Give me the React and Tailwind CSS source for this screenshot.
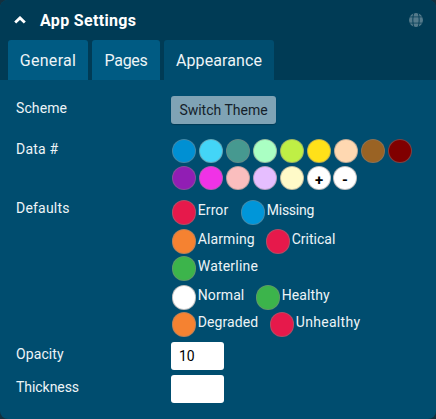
const palette = [
  ['#0090d3', '#43d5f7', '#469990', '#aaffc3', '#bfef45', '#ffe119', '#ffd8b1', '#9a6324', '#800000'],
  ['#911eb4', '#f032e6', '#fabebe', '#e6beff', '#fffac8'],
];

function Dot({ color, children }) {
  return (
    <span
      className="flex h-[24.5px] w-[24.5px] shrink-0 items-center justify-center rounded-full border border-[#808080]/50 pt-1 text-[15px] font-bold text-black"
      style={{ backgroundColor: color }}
    >
      {children}
    </span>
  );
}

function Status({ color, width, track, children }) {
  return (
    <div className={`flex h-6 shrink-0 ${width}`}>
      <Dot color={color} />
      <span className={`-mt-px ml-[1.5px] whitespace-nowrap text-[14px] leading-[22px] ${track}`}>{children}</span>
    </div>
  );
}

function Tab({ width, bg, track, children }) {
  return (
    <button className={`h-10 rounded-t-[3px] pt-px text-center text-[16px] leading-10 ${width} ${bg} ${track}`}>
      {children}
    </button>
  );
}

function Globe() {
  return (
    <svg width="14" height="14" viewBox="0 0 14 14">
      <circle cx="7" cy="7" r="7" fill="#547a8b" />
      <g fill="none" stroke="#003b55" strokeWidth="0.9">
        <path d="M0 3.9h14M0 10.1h14" strokeOpacity="0.8" />
        <path d="M5 -0.5C3.4 3.5 3.4 10.5 5 14.5M9 -0.5C10.6 3.5 10.6 10.5 9 14.5" />
      </g>
    </svg>
  );
}

export default function App() {
  return (
    <div className="h-[419px] w-[436px] overflow-hidden bg-[#12303f] font-['Roboto',sans-serif] text-[#edf4f7]">
      <div className="h-full overflow-hidden rounded-[8px] bg-[#004d6f]">
        <header className="h-20 bg-[#003b55]">
          <div className="flex h-10 items-center pl-[14px] pr-[13px]">
            <svg width="12" height="8" viewBox="0 0 12 8" fill="none" stroke="#fff" strokeWidth="2.8" className="mr-[14px]">
              <path d="M1.2 6.6 6 1.9 10.8 6.6" />
            </svg>
            <h1 className="grow pt-px text-[16px] font-bold tracking-[0.33px] text-white">App Settings</h1>
            <Globe />
          </div>
          <nav className="flex gap-1 pl-2">
            <Tab width="w-20" bg="bg-[#005b83]" track="tracking-[0.3px]">General</Tab>
            <Tab width="w-[68px]" bg="bg-[#005b83]" track="tracking-[-0.3px]">Pages</Tab>
            <Tab width="w-[110px]" bg="bg-[#004d6f]" track="tracking-[0.1px]">Appearance</Tab>
          </nav>
        </header>
        <main className="grid grid-cols-[155px_1fr] pl-4 pt-4 text-[14px] leading-6">
          <div className="h-[42px] tracking-[0.1px]">Scheme</div>
          <div>
            <button className="h-7 w-[105px] rounded-[3px] bg-[#7fa3b5] text-[14px] leading-7 text-[#14212a] shadow-[0_1px_1px_#003b55]">
              Switch Theme
            </button>
          </div>
          <div className="-mt-px h-[61px] tracking-[0.2px]">Data #</div>
          <div className="flex flex-col gap-[2.5px] pt-[0.75px]">
            {palette.map((row, i) => (
              <div key={i} className="flex gap-[2.5px] pl-[0.75px]">
                {row.map((c) => <Dot key={c} color={c} />)}
                {i === 1 && (
                  <div className="flex gap-[1.5px]">
                    <Dot color="#fff">+</Dot>
                    <Dot color="#fff">-</Dot>
                  </div>
                )}
              </div>
            ))}
          </div>
          <div className="-mt-[2px] tracking-[0.2px]">Defaults</div>
          <div className="h-[144px] pl-[0.75px] pt-[2px]">
            <div className="flex h-[29px]">
              <Status color="#e6194b" width="w-[69px]" track="tracking-[0.1px]">Error</Status>
              <Status color="#0096d9" width="w-auto" track="tracking-[-0.25px]">Missing</Status>
            </div>
            <div className="flex h-[27px]">
              <Status color="#f58231" width="w-[94px]" track="tracking-[0.1px]">Alarming</Status>
              <Status color="#e6194b" width="w-auto" track="tracking-[0px]">Critical</Status>
            </div>
            <div className="flex h-[29px]">
              <Status color="#3cb44b" width="w-auto" track="tracking-[0.2px]">Waterline</Status>
            </div>
            <div className="flex h-[27px]">
              <Status color="#fff" width="w-[84px]" track="tracking-[0.1px]">Normal</Status>
              <Status color="#3cb44b" width="w-auto" track="tracking-[0.1px]">Healthy</Status>
            </div>
            <div className="flex h-[27px]">
              <Status color="#f58231" width="w-[98px]" track="tracking-[0.1px]">Degraded</Status>
              <Status color="#e6194b" width="w-auto" track="tracking-[0.3px]">Unhealthy</Status>
            </div>
          </div>
          <div className="h-[33px] tracking-[0.1px]">Opacity</div>
          <div>
            <input defaultValue="10" aria-label="Opacity" className="block h-7 w-[53px] rounded-[3px] bg-white px-2 text-[14px] text-black outline-none" />
          </div>
          <div className="h-[33px] tracking-[-0.05px]">Thickness</div>
          <div>
            <input aria-label="Thickness" className="block h-7 w-[53px] rounded-[3px] bg-white px-2 text-[14px] text-black outline-none" />
          </div>
        </main>
      </div>
    </div>
  );
}
